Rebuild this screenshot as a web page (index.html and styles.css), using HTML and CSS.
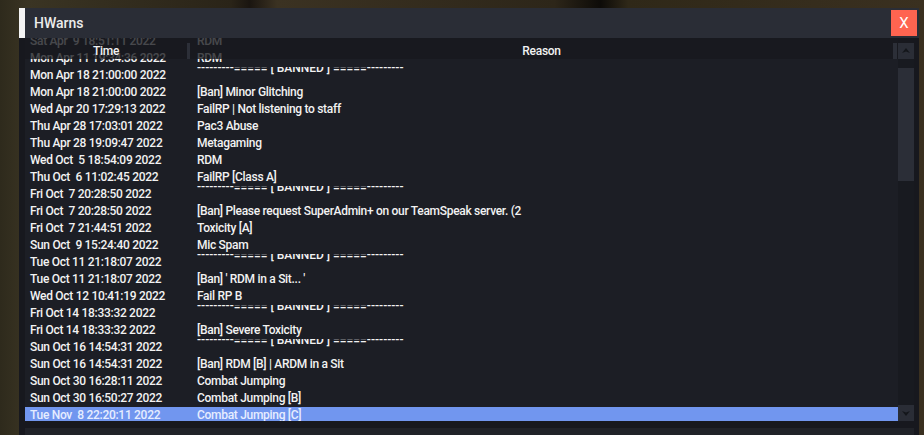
FILE: index.html
```html
<!DOCTYPE html>
<html>
<head>
<meta charset="utf-8">
<link rel="stylesheet" href="styles.css">
</head>
<body>
<div class="window">
  <div class="titlebar">
    <div class="accent"></div>
    <div class="title">HWarns</div>
    <div class="close">X</div>
  </div>
  <div class="content">
    <div class="listwrap">
      <div class="list">
        <div class="rows">
          <div class="row"><div class="time">Sat Apr  9 18:51:11 2022</div><div class="reason">RDM</div></div>
          <div class="row"><div class="time">Mon Apr 11 19:34:36 2022</div><div class="reason">RDM</div></div>
          <div class="row"><div class="time">Mon Apr 18 21:00:00 2022</div><div class="reason"><div class="banned">---------===== [ BANNED ] =====---------</div></div></div>
          <div class="row"><div class="time">Mon Apr 18 21:00:00 2022</div><div class="reason">[Ban] Minor Glitching</div></div>
          <div class="row"><div class="time">Wed Apr 20 17:29:13 2022</div><div class="reason">FailRP | Not listening to staff</div></div>
          <div class="row"><div class="time">Thu Apr 28 17:03:01 2022</div><div class="reason">Pac3 Abuse</div></div>
          <div class="row"><div class="time">Thu Apr 28 19:09:47 2022</div><div class="reason">Metagaming</div></div>
          <div class="row"><div class="time">Wed Oct  5 18:54:09 2022</div><div class="reason">RDM</div></div>
          <div class="row"><div class="time">Thu Oct  6 11:02:45 2022</div><div class="reason">FailRP [Class A]</div></div>
          <div class="row"><div class="time">Fri Oct  7 20:28:50 2022</div><div class="reason"><div class="banned">---------===== [ BANNED ] =====---------</div></div></div>
          <div class="row"><div class="time">Fri Oct  7 20:28:50 2022</div><div class="reason">[Ban] Please request SuperAdmin+ on our TeamSpeak server. (2</div></div>
          <div class="row"><div class="time">Fri Oct  7 21:44:51 2022</div><div class="reason">Toxicity [A]</div></div>
          <div class="row"><div class="time">Sun Oct  9 15:24:40 2022</div><div class="reason">Mic Spam</div></div>
          <div class="row"><div class="time">Tue Oct 11 21:18:07 2022</div><div class="reason"><div class="banned">---------===== [ BANNED ] =====---------</div></div></div>
          <div class="row"><div class="time">Tue Oct 11 21:18:07 2022</div><div class="reason">[Ban] ' RDM in a Sit... '</div></div>
          <div class="row"><div class="time">Wed Oct 12 10:41:19 2022</div><div class="reason">Fail RP B</div></div>
          <div class="row"><div class="time">Fri Oct 14 18:33:32 2022</div><div class="reason"><div class="banned">---------===== [ BANNED ] =====---------</div></div></div>
          <div class="row"><div class="time">Fri Oct 14 18:33:32 2022</div><div class="reason">[Ban] Severe Toxicity</div></div>
          <div class="row"><div class="time">Sun Oct 16 14:54:31 2022</div><div class="reason"><div class="banned">---------===== [ BANNED ] =====---------</div></div></div>
          <div class="row"><div class="time">Sun Oct 16 14:54:31 2022</div><div class="reason">[Ban] RDM [B] | ARDM in a Sit</div></div>
          <div class="row"><div class="time">Sun Oct 30 16:28:11 2022</div><div class="reason">Combat Jumping</div></div>
          <div class="row"><div class="time">Sun Oct 30 16:50:27 2022</div><div class="reason">Combat Jumping [B]</div></div>
          <div class="row selected"><div class="time">Tue Nov  8 22:20:11 2022</div><div class="reason">Combat Jumping [C]</div></div>
        </div>
        <div class="header">
          <div class="hcell">Time</div>
          <div class="hdiv"></div>
          <div class="hcell">Reason</div>
          <div class="hdiv wide"></div>
        </div>
      </div>
      <div class="scrollbar">
        <div class="sbtn">
          <svg width="16" height="16" viewBox="0 0 16 16"><path d="M4 10 L8 5 L12 10 L8 8.5 Z" fill="#14161b"/></svg>
        </div>
        <div class="track"><div class="thumb"></div></div>
        <div class="sbtn">
          <svg width="16" height="16" viewBox="0 0 16 16"><path d="M4 6 L8 11 L12 6 L8 7.5 Z" fill="#14161b"/></svg>
        </div>
      </div>
    </div>
    <div class="bottom"></div>
  </div>
</div>
</body>
</html>
```
FILE: styles.css
```css
html, body {
  margin: 0;
  padding: 0;
}
body {
  width: 924px;
  height: 435px;
  overflow: hidden;
  background: linear-gradient(90deg, #2e2a1c 0%, #3a3423 3%, #2a2418 25%, #1a1510 27%, #3b3222 30%, #2d2619 60%, #0d0b08 65%, #2f2818 68%, #3a3020 100%);
  font-family: Roboto, "Liberation Sans", sans-serif;
}
.window {
  margin: 8px 5px 0 19px;
  width: 900px;
  height: 427px;
  display: flex;
  flex-direction: column;
  background: #17181e;
}
.titlebar {
  height: 30px;
  flex: none;
  display: flex;
  align-items: flex-start;
  background: #2a2d36;
}
.accent {
  width: 6px;
  height: 30px;
  background: #f4f4f4;
}
.title {
  flex: 1;
  padding-left: 9px;
  line-height: 30px;
  font-size: 14px;
  font-weight: 500;
  color: #ececec;
}
.close {
  width: 26px;
  height: 26px;
  margin: 2px 2px 0 0;
  background: #ff6450;
  color: #fff;
  font-size: 15px;
  line-height: 26px;
  text-align: center;
}
.content {
  flex: 1;
  display: flex;
  flex-direction: column;
  gap: 7px;
  padding: 0 5px 0 6px;
}
.listwrap {
  height: 383px;
  display: flex;
}
.list {
  position: relative;
  flex: 1;
  overflow: hidden;
  background: #1c1e25;
}
.rows {
  margin-top: -5px;
}
.row {
  height: 17px;
  display: grid;
  grid-template-columns: 165px 1fr;
  font-size: 12px;
  font-weight: 500;
  letter-spacing: -0.3px;
  color: #f2f2f2;
  line-height: 17px;
}
.row.selected {
  background: #7196ef;
  color: #e6edff;
}
.time {
  padding-left: 5px;
  white-space: pre;
}
.reason {
  padding-left: 7px;
  white-space: pre;
  overflow: hidden;
}
.banned {
  margin-top: -7px;
  letter-spacing: 0;
}
.header {
  position: absolute;
  top: 0;
  left: 0;
  right: 0;
  height: 16px;
  padding-top: 5px;
  display: grid;
  grid-template-columns: 162px 3px 1fr 4px 1px;
  background: rgba(23, 24, 30, 0.78);
}
.hcell {
  text-align: center;
  font-size: 12px;
  font-weight: 500;
  letter-spacing: -0.3px;
  color: #f2f2f2;
  line-height: 16px;
}
.hdiv {
  background: #2c2f38;
}
.scrollbar {
  width: 16px;
  margin-top: 5px;
  display: flex;
  flex-direction: column;
  background: #181a20;
}
.sbtn {
  width: 16px;
  height: 16px;
  background: #2a2d36;
}
.sbtn svg {
  display: block;
}
.track {
  flex: 1;
  padding-top: 9px;
}
.thumb {
  height: 113px;
  background: #2b2e37;
}
.bottom {
  flex: 1;
  background: #202228;
}
```
